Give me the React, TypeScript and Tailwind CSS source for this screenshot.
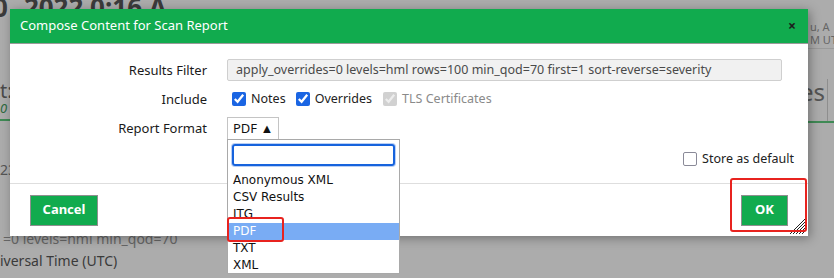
import React from "react";

const Grip = () => (
  <svg width="16" height="16" viewBox="0 0 16 16" className="block">
    {[0, 3, 6, 9, 12].map((o) => (
      <line key={o} x1={16} y1={o} x2={o} y2={16} stroke="#222" strokeWidth={1} />
    ))}
  </svg>
);

export default function App() {
  const options = ["Anonymous XML", "CSV Results", "ITG", "PDF", "TXT", "XML"];
  return (
    <div className="relative w-[834px] h-[278px] overflow-hidden bg-[#acacac] font-['Noto_Sans',sans-serif] text-[#3a3a3a]">
      {/* background page (dimmed) */}
      <div className="flex justify-between h-full">
        <div className="flex flex-col w-[200px]">
          <div className="mt-[-8px] h-[30px] text-[26px] font-bold leading-[30px] whitespace-nowrap text-[#3b3b3b] flex">
            <span className="ml-[-7px]">0</span>
            <span className="ml-[16px]">2022 0:16 A</span>
          </div>
          <div className="mt-[57px] h-[24px] text-[20px] leading-[24px] text-[#4a4a4a]">t:</div>
          <div className="mt-[-2px] h-[14px] text-[13px] italic leading-[14px] text-[#2d6a40]">0</div>
          <div className="mt-[4px] w-[10px] h-[2px] bg-[#3f8a55]"></div>
          <div className="mt-[40px] h-[18px] text-[14px] leading-[18px] text-[#555]">23</div>
          <div className="mt-[51px] h-[18px] text-[14px] leading-[18px] text-[#666] whitespace-nowrap pl-[3px]">=0 levels=hml min_qod=70</div>
          <div className="mt-[4px] h-[18px] text-[14px] leading-[18px] text-[#3a3a3a] whitespace-nowrap">iversal Time (UTC)</div>
        </div>
        <div className="flex flex-col w-[26px] overflow-hidden">
          <div className="mt-[20px] h-[13px] text-[11px] leading-[13px] text-[#666] whitespace-nowrap pl-[2px]">u, A</div>
          <div className="h-[13px] text-[11px] leading-[13px] text-[#666] whitespace-nowrap pl-[2px]">M UTC</div>
          <div className="mt-[2px] h-px bg-[#9a9a9a]"></div>
          <div className="mt-[30px] flex">
            <div className="w-[20px] h-[42px] border-r border-[#8e8e8e] flex items-start justify-end">
              <span className="mt-[-1px] text-[24px] leading-[28px] text-[#555] whitespace-nowrap pr-[2px]">es</span>
            </div>
          </div>
          <div className="h-[2px] bg-[#3f8a55]"></div>
        </div>
      </div>

      {/* dialog */}
      <div className="absolute left-[10px] top-[9px] w-[798px] h-[227px] bg-white flex flex-col shadow-[2px_2px_10px_rgba(0,0,0,0.35)]">
        <div className="h-[35px] bg-[#11ab4e] border-b border-[#9a9a9a] flex items-center justify-between pl-[10px] pr-[12px]">
          <span className="text-white text-[13px]">Compose Content for Scan Report</span>
          <span className="text-[#1c1c1c] text-[14px] font-bold leading-none">×</span>
        </div>

        <div className="flex-1 flex flex-col pt-[15px] border-b border-[#dedede] relative">
          <div className="grid grid-cols-[197px_1fr] gap-x-[20px] gap-y-[7px] pr-[26px] items-center">
            <div className="text-right text-[13px] text-[#1a1a1a] h-[22px] leading-[22px]">Results Filter</div>
            <div className="h-[22px] bg-[#f1f1f1] border border-[#cfcfcf] rounded-[2px] pl-[8px] text-[12.5px] leading-[20px] text-[#4a4a4a] whitespace-nowrap overflow-hidden">
              apply_overrides=0 levels=hml rows=100 min_qod=70 first=1 sort-reverse=severity
            </div>

            <div className="text-right text-[13px] text-[#1a1a1a] h-[22px] leading-[22px]">Include</div>
            <div className="flex items-center h-[22px] text-[12.5px] text-[#222]">
              <input type="checkbox" defaultChecked className="ml-[5px] w-[14px] h-[14px] accent-[#1a65e3] m-0" />
              <span className="ml-[5px]">Notes</span>
              <input type="checkbox" defaultChecked className="ml-[10px] w-[14px] h-[14px] accent-[#1a65e3] m-0" />
              <span className="ml-[5px]">Overrides</span>
              <input type="checkbox" defaultChecked disabled className="ml-[11px] w-[14px] h-[14px] m-0" />
              <span className="ml-[5px] text-[#8a8a8a]">TLS Certificates</span>
            </div>

            <div className="text-right text-[13px] text-[#1a1a1a] h-[22px] leading-[22px]">Report Format</div>
            <div className="h-[22px] flex">
              <div className="h-[22px] w-[52px] border border-[#c4c4c4] border-b-0 pl-[5px] text-[13px] leading-[20px] text-[#111] whitespace-nowrap">PDF ▲</div>
            </div>
          </div>

          <div className="flex justify-end items-center mt-[11px] pr-[14px]">
            <span className="w-[14px] h-[14px] border-[1.5px] border-[#8a8a98] rounded-[2px]"></span>
            <span className="ml-[5px] text-[12.5px] text-[#222]">Store as default</span>
          </div>

          {/* dropdown */}
          <div className="absolute left-[217px] top-[95px] w-[173px] h-[135px] bg-white border border-[#a9a9a9] z-10 pt-[4px] font-['DejaVu_Sans',sans-serif]">
            <div className="mx-[4px] h-[22px] border-2 border-[#1663dd] rounded-[3px] shadow-[0_0_0_1px_#b9cff5]"></div>
            <div className="mt-[6px] flex flex-col">
              {options.map((o) => (
                <div
                  key={o}
                  className={
                    "h-[17px] leading-[17px] pl-[5px] text-[12px] " +
                    (o === "PDF" ? "bg-[#79acf4] text-white" : "text-[#111]")
                  }
                >
                  {o}
                </div>
              ))}
            </div>
          </div>
        </div>

        <div className="h-[52px] flex items-center justify-between px-[20px] relative">
          <button className="h-[31px] w-[68px] bg-[#11ab4e] border border-[#8f8f8f] text-white text-[13px] font-bold">Cancel</button>
          <button className="h-[31px] w-[47px] bg-[#11ab4e] border border-[#8f8f8f] text-white text-[13px] font-bold">OK</button>
          <div className="absolute right-[2px] bottom-[2px]">
            <Grip />
          </div>
        </div>
      </div>

      {/* annotation boxes */}
      <div className="absolute left-[227px] top-[217px] w-[57px] h-[25px] border-2 border-[#e8231f] rounded-[3px] z-20"></div>
      <div className="absolute left-[730px] top-[178px] w-[77px] h-[54px] border-2 border-[#e8231f] rounded-[3px] z-20"></div>
    </div>
  );
}
